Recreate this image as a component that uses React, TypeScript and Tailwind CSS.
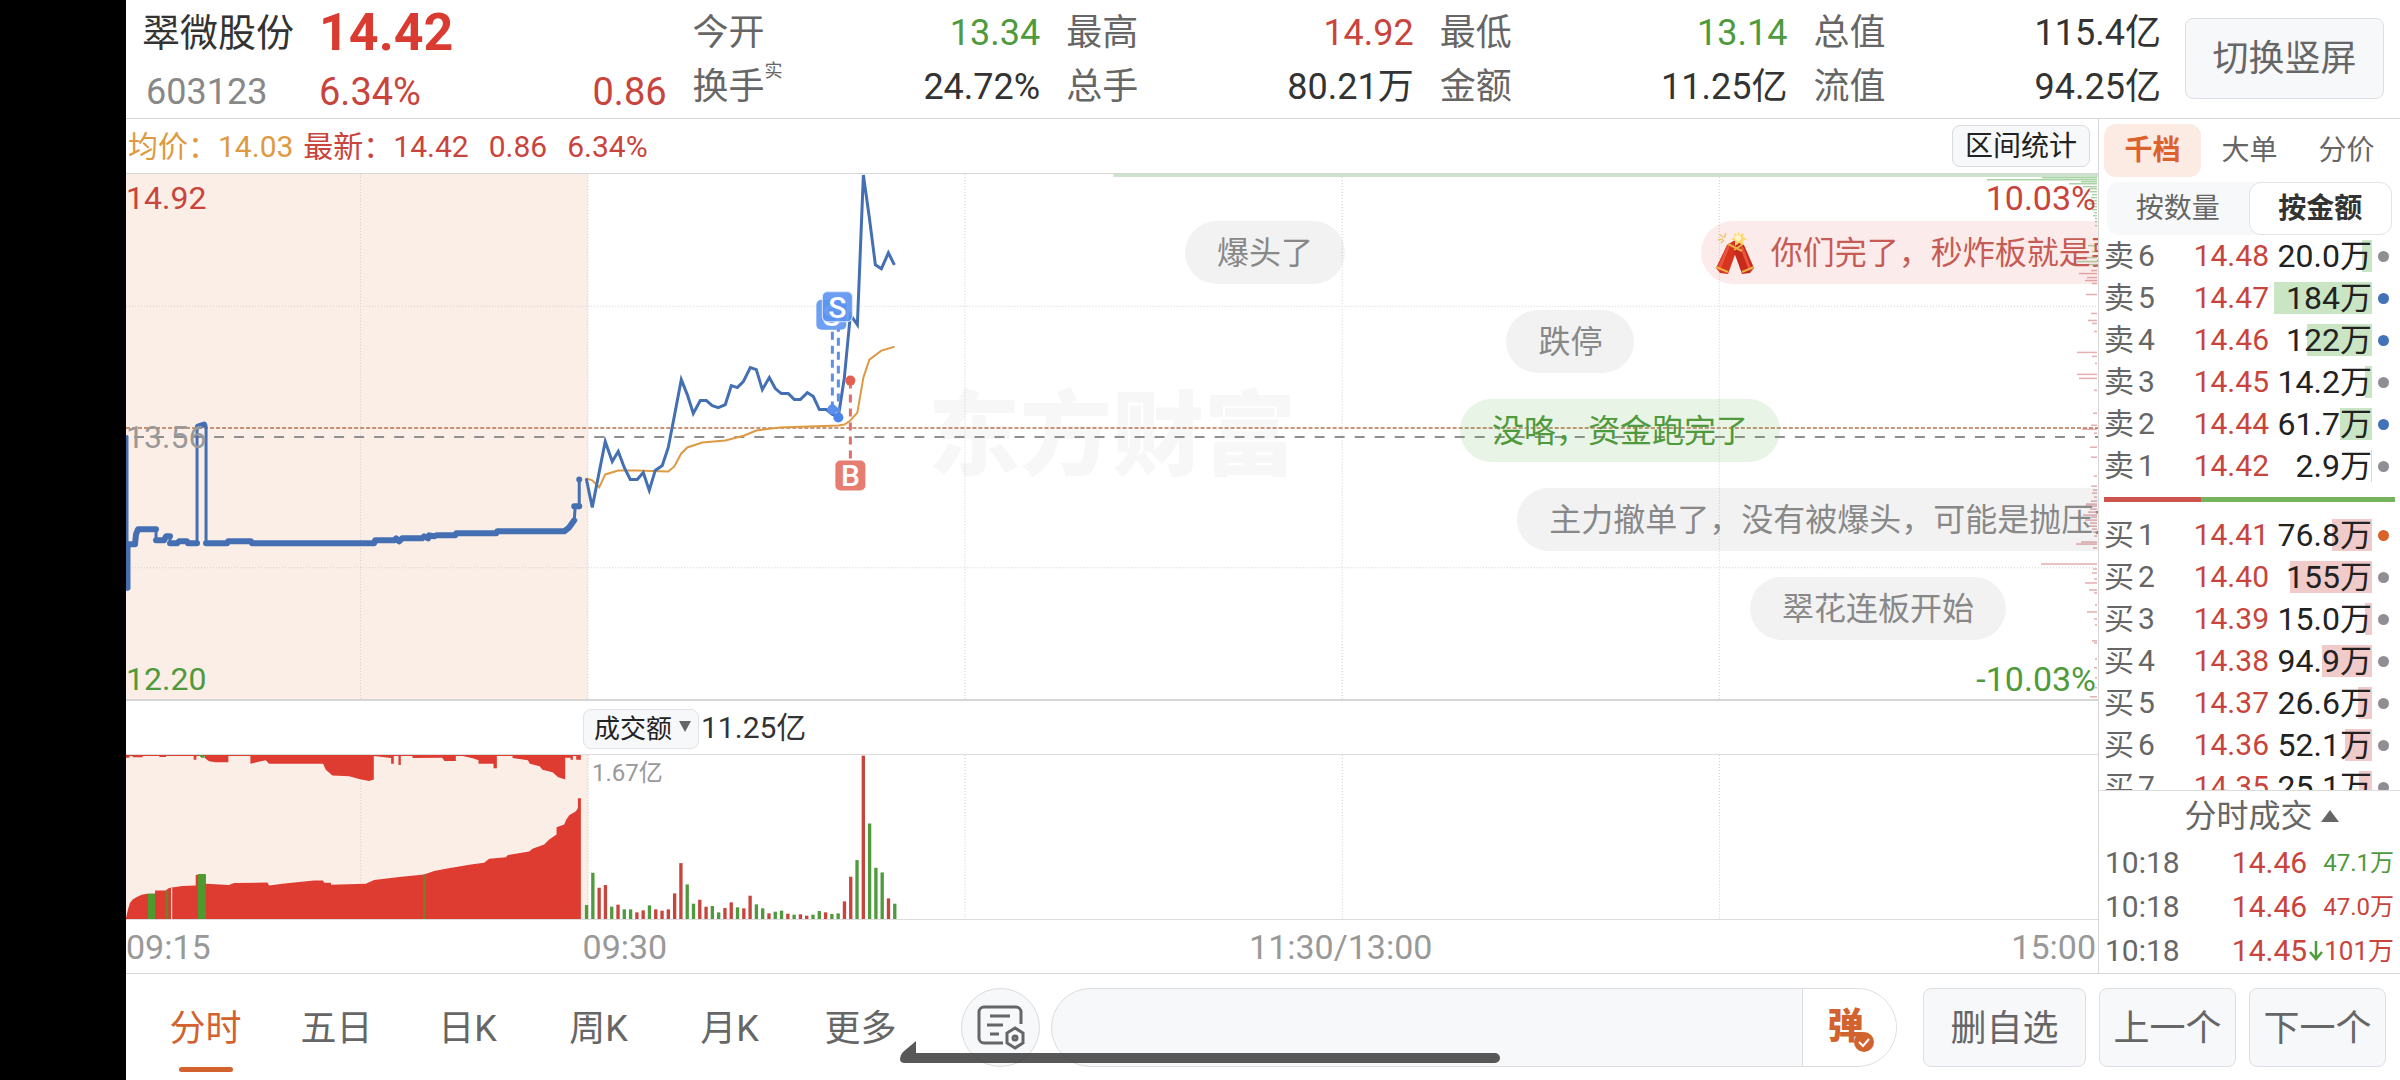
import clsx from 'clsx'

const RED = '#c8443c'
const GREEN = '#4f9a3c'

const quotes = [
  { label: '今开', value: '13.34', tone: 'text-[#4f9a3c]', label2: '换手', sup: '实', value2: '24.72%' },
  { label: '最高', value: '14.92', tone: 'text-[#c8443c]', label2: '总手', value2: '80.21万' },
  { label: '最低', value: '13.14', tone: 'text-[#4f9a3c]', label2: '金额', value2: '11.25亿' },
  { label: '总值', value: '115.4亿', tone: 'text-[#333]', label2: '流值', value2: '94.25亿' },
]

const sells = [
  { side: '卖', level: 6, price: '14.48', amount: '20.0万', bar: 10, dot: 'bg-[#8e8e93]' },
  { side: '卖', level: 5, price: '14.47', amount: '184万', bar: 98, dot: 'bg-[#4272b8]' },
  { side: '卖', level: 4, price: '14.46', amount: '122万', bar: 65, dot: 'bg-[#4272b8]' },
  { side: '卖', level: 3, price: '14.45', amount: '14.2万', bar: 7, dot: 'bg-[#8e8e93]' },
  { side: '卖', level: 2, price: '14.44', amount: '61.7万', bar: 32, dot: 'bg-[#4272b8]' },
  { side: '卖', level: 1, price: '14.42', amount: '2.9万', bar: 1, dot: 'bg-[#8e8e93]' },
]

const buys = [
  { side: '买', level: 1, price: '14.41', amount: '76.8万', bar: 40, dot: 'bg-[#d9622b]' },
  { side: '买', level: 2, price: '14.40', amount: '155万', bar: 82, dot: 'bg-[#8e8e93]' },
  { side: '买', level: 3, price: '14.39', amount: '15.0万', bar: 7, dot: 'bg-[#8e8e93]' },
  { side: '买', level: 4, price: '14.38', amount: '94.9万', bar: 50, dot: 'bg-[#8e8e93]' },
  { side: '买', level: 5, price: '14.37', amount: '26.6万', bar: 14, dot: 'bg-[#8e8e93]' },
  { side: '买', level: 6, price: '14.36', amount: '52.1万', bar: 27, dot: 'bg-[#8e8e93]' },
  { side: '买', level: 7, price: '14.35', amount: '25.1万', bar: 13, dot: 'bg-[#8e8e93]' },
]

const trades = [
  { time: '10:18', price: '14.46', amount: '47.1万', tone: 'text-[24px] text-[#4f9a3c]', down: false },
  { time: '10:18', price: '14.46', amount: '47.0万', tone: 'text-[24px] text-[#c8443c]', down: false },
  { time: '10:18', price: '14.45', amount: '101万', tone: 'text-[26px] text-[#c8443c]', down: true },
]

// x is a share of the chart width, row counts the comment lanes from the top
const comments = [
  { text: '爆头了', x: 53.7, row: 0, tone: 'bg-black/5 text-[#888]' },
  { text: '你们完了，秒炸板就是要', x: 79.85, row: 0, tone: 'bg-[#d8443c]/10 text-[#c65b55]', cracker: true },
  { text: '跌停', x: 70, row: 1, tone: 'bg-black/5 text-[#888]' },
  { text: '没咯，资金跑完了', x: 67.65, row: 2, tone: 'bg-[#4caa3c]/13 text-[#4f9a3c]' },
  { text: '主力撤单了，没有被爆头，可能是抛压力', x: 70.55, row: 3, tone: 'bg-black/5 text-[#888]' },
  { text: '翠花连板开始', x: 82.35, row: 4, tone: 'bg-black/5 text-[#888]' },
]

const auctionLine =
  '2,371 9,371 10,361 12,356 30,356 30,367 38,367 40,363 44,363 44,370 51,370 53,368 61,368 62,370 71,370 71,253 75,253 78,251 80,252 80,370 101,370 102,368 125,368 126,370 248,370 249,367 268,367 270,365 273,368 276,365 296,365 298,363 302,365 303,362 308,363 310,362 329,362 330,360 370,360 371,358 438,358 443,354 448,347 449,333 453,333 453,306'

const auctionDots =
  '2,371 9,371 10,361 12,356 30,356 M30,367 38,367 40,363 44,363 M44,370 51,370 53,368 61,368 62,370 71,370 M72,253 78,251 M80,370 101,370 102,368 125,368 126,370 248,370 249,367 268,367 270,365 273,368 276,365 296,365 298,363 302,365 303,362 308,363 310,362 329,362 330,360 370,360 371,358 438,358 443,354 448,347 M448,333 453,333 M453,306 453,306.1'

const priceLine =
  '460,305 466,334 479,268 486,288 492,278 498,294 504,306 511,306 517,299 523,317 529,297 536,292 542,274 548,243 555,206 561,221 567,240 574,227 580,227 586,232 592,234 599,231 605,212 611,214 617,208 624,194 630,196 636,216 643,204 649,215 655,220 662,220 668,226 674,226 681,219 687,223 693,236 700,236 706,241 712,243 718,204 724,141 731,151 737,1 743,44 749,91 755,95 762,79 768,91'

const averageLine =
  '460,305 466,307 473,314 479,301 492,297 510,297 542,298 548,293 555,280 561,274 576,269 599,267 618,262 630,257 653,254 712,252 718,251 724,247 731,239 737,204 743,186 755,177 768,173'

// [y, length, side] of the resting orders along the right edge
const depth: [number, number, string][] = [
  [4, 55, 'g'], [6, 110, 'g'], [8, 16, 'g'], [10, 28, 'g'], [13, 14, 'g'], [15, 8, 'g'], [18, 7, 'g'], [21, 5, 'g'], [24, 6, 'g'],
  [27, 12, 'g'], [30, 8, 'g'], [33, 4, 'g'], [36, 5, 'g'], [39, 3, 'g'], [42, 4, 'g'], [45, 2, 'g'], [48, 2, 'g'], [52, 2, 'g'],
  [72, 9, 'g'], [78, 5, 'g'], [84, 14, 'g'], [88, 20, 'g'], [91, 10, 'g'],
  [97, 6, 'r'], [100, 18, 'r'], [104, 10, 'r'], [107, 12, 'r'], [110, 5, 'r'], [121, 11, 'r'], [140, 6, 'r'], [147, 9, 'r'], [150, 5, 'r'],
  [158, 3, 'r'], [179, 20, 'r'], [183, 5, 'r'], [190, 2, 'r'], [201, 20, 'r'], [205, 18, 'r'], [217, 3, 'r'], [240, 4, 'r'], [252, 6, 'r'],
  [256, 15, 'r'], [260, 3, 'r'], [274, 7, 'r'], [284, 6, 'r'], [303, 3, 'r'], [313, 6, 'r'], [317, 4, 'r'], [320, 5, 'r'], [324, 3, 'r'],
  [328, 6, 'r'], [331, 11, 'r'], [333, 12, 'r'], [336, 7, 'r'], [339, 9, 'r'], [342, 14, 'r'], [344, 6, 'r'], [347, 12, 'r'], [350, 7, 'r'],
  [353, 8, 'r'], [356, 5, 'r'], [359, 4, 'r'], [363, 3, 'r'], [369, 16, 'r'], [371, 21, 'r'], [375, 4, 'r'], [391, 56, 'r'], [396, 4, 'r'],
  [400, 5, 'r'], [406, 3, 'r'], [410, 12, 'r'], [417, 8, 'r'], [420, 3, 'r'], [432, 2, 'r'], [439, 10, 'r'], [446, 3, 'r'], [452, 2, 'r'],
  [468, 5, 'r'], [470, 3, 'r'], [486, 2, 'r'], [495, 3, 'r'], [505, 2, 'r'], [515, 2, 'r'], [524, 7, 'r'],
]

// turnover per minute, in thirds of a pixel
const turnover: [number, string][] = [
  [42, 'g'], [139, 'g'], [94, 'r'], [102, 'r'], [37, 'g'], [43, 'r'], [29, 'g'], [29, 'g'], [20, 'r'], [26, 'r'],
  [41, 'g'], [29, 'r'], [25, 'r'], [29, 'r'], [77, 'r'], [168, 'r'], [104, 'g'], [46, 'g'], [58, 'r'], [37, 'r'],
  [39, 'g'], [20, 'g'], [33, 'r'], [50, 'r'], [35, 'g'], [32, 'r'], [70, 'r'], [44, 'g'], [32, 'g'], [17, 'r'],
  [22, 'g'], [25, 'g'], [16, 'r'], [13, 'g'], [14, 'r'], [10, 'r'], [13, 'g'], [24, 'g'], [20, 'r'], [15, 'g'],
  [17, 'g'], [53, 'r'], [127, 'r'], [177, 'g'], [491, 'r'], [287, 'g'], [154, 'g'], [140, 'g'], [62, 'r'], [46, 'g'],
]

const Firecracker = () => (
  <svg viewBox="0 0 40 44" className="h-11 w-10 shrink-0">
    <path d="M20 9 12 14 1 37l4 5 8 1 8-22z" fill="#d8331f" />
    <path d="M20 9l9 5 10 23-4 5-8 1-8-22z" fill="#c62a1b" />
    <path d="M13 16 4 38M27 17l8 21" stroke="#e8553a" strokeWidth="3" strokeLinecap="round" />
    <path d="M1 36l12 5M39 36l-12 5M13 13l14 7M28 13l-9 6" stroke="#e9b04b" strokeWidth="2" />
    <path d="M23 0l2 4 4-2-1 4 4 2-4 2 1 4-5-2-4 3 0-5-4-2 4-2-1-4 4 2z" fill="#ffd970" />
    <circle cx="23" cy="7" r="3" fill="#fff5c9" />
    <path d="M4 3l4 3M11 2l-2 5M3 9l5-1M6 12l3-3" stroke="#ecc573" strokeWidth="1.5" />
  </svg>
)

const Header = () => (
  <header className="flex h-[119px] shrink-0 items-start border-b border-[#d6d6d6] pr-4 pl-4">
    <div className="w-[177px] shrink-0 pt-2">
      <h1 className="text-[38px] leading-[50px] text-[#333]">翠微股份</h1>
      <p className="mt-2.5 pl-1 text-[36px] leading-[48px] text-[#888]">603123</p>
    </div>
    <div className="grid flex-1 grid-cols-5 gap-x-[26px] text-[36px] leading-[48px]">
      <div className="pt-2 text-[#c8443c]">
        <p className="text-[52px] leading-[50px] font-bold text-[#da3b31]">14.42</p>
        <div className="mt-2.5 flex justify-between text-[38px]">
          <span>6.34%</span>
          <span>0.86</span>
        </div>
      </div>
      {quotes.map((q) => (
        <dl key={q.label} className="grid grid-cols-[auto_1fr] content-start gap-y-1.5 pt-[9px] text-[#333]">
          <dt className="text-[#666]">{q.label}</dt>
          <dd className={clsx('text-right', q.tone)}>{q.value}</dd>
          <dt className="flex text-[#666]">
            {q.label2}
            {q.sup && <span className="text-[18px] leading-4">{q.sup}</span>}
          </dt>
          <dd className="text-right">{q.value2}</dd>
        </dl>
      ))}
    </div>
    <button className="mt-[18px] ml-6 h-[81px] w-[199px] rounded-lg border border-[#dcdfe3] bg-[#f7f8fa] text-[36px] text-[#666]">切换竖屏</button>
  </header>
)

const PriceChart = () => (
  <div className="relative min-h-0 flex-1 overflow-hidden border-b-2 border-[#d6d6d6] text-[32px] leading-8">
    <div className="absolute inset-0 flex items-center justify-center text-[92px] font-black text-[#f7f7f7]">东方财富</div>
    <svg viewBox="0 0 1971 526" preserveAspectRatio="none" className="absolute inset-0 h-full w-full">
      <rect width="462" height="526" fill="#fbeee7" />
      <g stroke="#cfcfcf" strokeDasharray="1 2">
        <path d="M0 132.5H1971M0 394.5H1971M234.5 0V526M461.5 0V526M838.5 0V526M1215.5 0V526M1592.5 0V526" />
      </g>
      <rect x="987" width="984" height="3" fill="#cde3cc" />
      {depth.map(([y, len, side]) => (
        <rect key={y} x={1970 - len} y={y - 1} width={len} height="1.5" fill={side === 'g' ? '#a9d3a5' : '#e3aeb0'} />
      ))}
      <path d="M0 254.5H1971" stroke="#b8734f" strokeWidth="1.5" strokeDasharray="4 2" />
      <path d="M8 263.5H1971" stroke="#8f8f8f" strokeWidth="2" strokeDasharray="10 10" />
      <g fill="none" stroke="#4470b3" strokeLinejoin="round" strokeLinecap="round">
        <path d="M1 263V416" strokeWidth="3" />
        <path d="M2 371V415" strokeWidth="5" />
        <polyline points={auctionLine} strokeWidth="3" />
        <path d={`M${auctionDots}`} strokeWidth="6" />
      </g>
      <polyline points={averageLine} fill="none" stroke="#dd9a42" strokeWidth="2" />
      <polyline points={priceLine} fill="none" stroke="#4470b3" strokeWidth="3" />
      <g stroke="#5c8fe6" strokeWidth="3" strokeDasharray="8 6">
        <path d="M706 158V236M712 150V244" />
        <path d="M724 207V286" stroke="#dd7067" />
      </g>
      <circle cx="706" cy="236" r="5" fill="#5a8fee" />
      <circle cx="712" cy="244" r="5" fill="#4a84ea" />
      <circle cx="724" cy="207" r="5" fill="#e3604f" />
      <g fontSize="30" fontWeight="500" textAnchor="middle" fill="#fff">
        <rect x="690" y="126" width="30" height="30" rx="5" fill="#6d9ff2" />
        <text x="705" y="152">S</text>
        <rect x="696" y="118" width="30" height="30" rx="5" fill="#5b92f0" fillOpacity="0.9" stroke="#dbe7fc" />
        <text x="711" y="144">S</text>
        <rect x="709" y="287" width="30" height="30" rx="5" fill="#e67d70" />
        <text x="724" y="313">B</text>
      </g>
    </svg>
    <span className="absolute top-2 left-0 text-[#c8443c]">14.92</span>
    <span className="absolute top-1/2 left-0 -translate-y-1/2 text-[#999]">13.56</span>
    <span className="absolute bottom-1 left-0 text-[#4f9a3c]">12.20</span>
    <span className="absolute top-2 right-0.5 text-[34px] text-[#c8443c]">10.03%</span>
    <span className="absolute right-0.5 bottom-1 text-[34px] text-[#4f9a3c]">-10.03%</span>
    {comments.map((c) => (
      <div
        key={c.text}
        className={clsx('absolute flex h-[63px] items-center rounded-full whitespace-nowrap', c.cracker ? 'gap-4 px-3.5' : 'px-8', c.tone)}
        style={{ left: `${c.x}%`, top: 47 + c.row * 89 }}
      >
        {c.cracker && <Firecracker />}
        {c.text}
      </div>
    ))}
  </div>
)

const VolumeChart = () => (
  <div className="relative h-[166px] shrink-0 border-y border-[#dcdcdc]">
    {/* three units to the pixel */}
    <svg viewBox="0 0 5913 493" preserveAspectRatio="none" className="absolute inset-0 h-full w-full">
      <rect width="1387" height="493" fill="#fbeee7" />
      <path d="M704 0V493M1385 0V493M2516 0V493M3647 0V493M4778 0V493" stroke="#cfcfcf" strokeWidth="3" strokeDasharray="3 6" />
      <g fill="#de3b31">
        <path d="M0 493V490L6 464 12 444 21 434 34 426 47 420 64 417H87V407H119L129 400 169 394 209 392V360H239V387L309 391 324 385 424 383 429 392 469 387 519 382 564 377H591L594 384H614L615 390 719 387 744 376 819 367 894 359 924 349 959 342 1034 329 1074 324 1089 312 1139 307 1144 301 1209 290 1219 282 1254 269 1269 254 1291 239V217L1314 209 1320 195 1329 181 1349 169 1355 159V130H1364V493Z" />
        <path d="M0 0H1364V14H1350V3H1340V14H1333V8H1317V74L1299 68 1295 66 1279 52 1249 44 1240 34 1211 26 1205 16 1159 9V3H1112V40H1102V26H1057V16L1040 10 1009 3H989V18H955L948 8 859 9V3H824V30H817V3H803V26H795V9L743 3V74L729 78 699 72 669 64 619 62 599 44 591 26H429L419 16 373 26V3H307V22H269L249 19 237 10V3H211V14H203V3H120V6H100V3H50V7H20V3H10V8H0Z" />
      </g>
      <path d="M66 417H87V493H66ZM216 358H239V493H216ZM218 0H234L237 8H226Z" fill="#4f9a2e" />
      <path d="M119 408H127V493H119ZM891 359H899V493H891Z" fill="#7a7a2c" />
      <path d="M137 400V493" stroke="#fff" strokeWidth="3" />
      {turnover.map(([h, side], i) => (
        <rect key={i} x={1376 + i * 18.86} y={493 - h} width="10" height={h} fill={side === 'g' ? GREEN : RED} />
      ))}
    </svg>
    <span className="absolute top-1 left-[466px] text-[24px] leading-7 text-[#999]">1.67亿</span>
  </div>
)

const OrderRows = ({ rows, fill }: { rows: typeof sells; fill: string }) => (
  <table className="w-full text-[30px] leading-[42px]">
    <tbody>
      {rows.map((r) => (
        <tr key={r.level}>
          <td className="h-[42px] p-0 text-[#666]">
            <span className="mr-1">{r.side}</span>
            {r.level}
          </td>
          <td className="p-0 text-right text-[#c8443c]">{r.price}</td>
          <td className="relative w-[103px] p-0 text-right text-[32px] text-[#222]">
            <span className={clsx('absolute top-[5px] right-0 h-8', fill)} style={{ width: r.bar }} />
            <span className="relative">{r.amount}</span>
          </td>
          <td className="w-[23px] p-0">
            <span className={clsx('ml-1.5 block size-[11px] rounded-full', r.dot)} />
          </td>
        </tr>
      ))}
    </tbody>
  </table>
)

const OrderPanel = () => (
  <aside className="flex w-[302px] shrink-0 flex-col border-l border-[#d6d6d6]">
    <div className="mt-[5px] flex h-[53px] shrink-0 px-[5px] text-[28px] text-[#666]">
      <button className="flex-1 rounded-xl bg-[#fcebe3] font-bold text-[#dc622c]">千档</button>
      <button className="flex-1">大单</button>
      <button className="flex-1">分价</button>
    </div>
    <div className="mx-2 mt-[5px] flex h-[53px] shrink-0 rounded-xl bg-[#f7f8fa] text-[28px] text-[#666]">
      <button className="flex-1">按数量</button>
      <button className="flex-1 rounded-xl border border-[#e3e4e6] bg-white font-bold text-[#333]">按金额</button>
    </div>
    <div className="min-h-0 flex-1 overflow-hidden px-[5px]">
      <OrderRows rows={sells} fill="bg-[#c9e5c4]" />
      <div className="mt-[10px] mb-[12px] flex h-[5px]">
        <div className="w-1/3 bg-[#cc544d]" />
        <div className="flex-1 bg-[#76b35d]" />
      </div>
      <OrderRows rows={buys} fill="bg-[#f1caca]" />
    </div>
    <div className="shrink-0 border-t border-[#dcdcdc] px-[6px] text-[30px] leading-[44px]">
      <button className="flex h-[50px] w-full items-center justify-center gap-2 pl-6 text-[32px] text-[#666]">
        分时成交
        <svg viewBox="0 0 18 12" className="h-3 w-[18px]">
          <path d="M9 0l9 12H0z" fill="#666" />
        </svg>
      </button>
      <table className="w-full">
        <tbody>
          {trades.map((t, i) => (
            <tr key={i}>
              <td className="h-[44px] p-0 text-[#666]">{t.time}</td>
              <td className="p-0 text-right text-[#c8443c]">{t.price}</td>
              <td className="w-[16px] p-0">
                {t.down && (
                  <svg viewBox="0 0 14 20" className="ml-0.5 h-5 w-3.5">
                    <path d="M7 0V18M1 11l6 7 6-7" fill="none" stroke="#4f9a3c" strokeWidth="2.5" />
                  </svg>
                )}
              </td>
              <td className={clsx('w-[70px] p-0 text-right whitespace-nowrap', t.tone)}>{t.amount}</td>
            </tr>
          ))}
        </tbody>
      </table>
    </div>
  </aside>
)

const Footer = () => (
  <footer className="flex h-[107px] shrink-0 items-center border-t border-[#d6d6d6] pr-3.5 pl-3.5 text-[36px] text-[#666]">
    <nav className="flex h-full">
      {['分时', '五日', '日K', '周K', '月K', '更多'].map((tab, i) => (
        <button key={tab} className={clsx('relative w-[131px] pt-1', i === 0 && 'text-[#d2622e]')}>
          {tab}
          {i === 0 && <span className="absolute bottom-2 left-1/2 h-[5px] w-[54px] -translate-x-1/2 rounded-full bg-[#d2622e]" />}
        </button>
      ))}
    </nav>
    <button aria-label="设置" className="ml-[35px] flex size-[79px] shrink-0 items-center justify-center rounded-full border border-[#d9dbde] bg-[#f7f8fa]">
      <svg viewBox="0 0 50 46" className="h-[46px] w-[50px]" fill="none" stroke="#666" strokeWidth="3">
        <path d="M27 39H8a5 5 0 0 1-5-5V8a5 5 0 0 1 5-5H40a5 5 0 0 1 5 5V20" />
        <path d="M14 12H34M11 21H27M14 30H23" />
        <path d="M39 24l8 5v10l-8 5-8-5V29z" />
        <circle cx="39" cy="34" r="2" />
      </svg>
    </button>
    <div className="ml-[11px] flex h-[79px] flex-1 overflow-hidden rounded-full border border-[#d9dbde] bg-[#f7f8fa]">
      <input aria-label="弹幕" className="min-w-0 flex-1 px-8 outline-none" />
      <button className="relative w-[94px] border-l border-[#d9dbde] bg-white pr-2 font-black text-[#d2622e]">
        弹
        <svg viewBox="0 0 20 20" className="absolute right-[22px] bottom-3.5 size-5">
          <circle cx="10" cy="10" r="10" fill="#d2622e" />
          <path d="M5 10l4 4 6-7" fill="none" stroke="#fff" strokeWidth="2" />
        </svg>
      </button>
    </div>
    <div className="ml-[26px] flex gap-[13px]">
      <button className="h-[79px] w-[163px] rounded-lg border border-[#dcdfe3] bg-[#f7f8fa] pt-1">删自选</button>
      <button className="h-[79px] w-[137px] rounded-lg border border-[#dcdfe3] bg-[#f7f8fa] pt-1">上一个</button>
      <button className="h-[79px] w-[137px] rounded-lg border border-[#dcdfe3] bg-[#f7f8fa] pt-1">下一个</button>
    </div>
  </footer>
)

export default function App() {
  return (
    <div className="relative flex h-screen bg-black font-[Roboto,'Noto_Sans_CJK_SC',sans-serif]">
      <div className="ml-[126px] flex min-w-0 flex-1 flex-col bg-white">
        <Header />
        <main className="flex min-h-0 flex-1">
          <section className="flex min-w-0 flex-1 flex-col">
            <div className="flex h-[55px] shrink-0 items-center border-b border-[#d6d6d6] pr-2 pl-0.5 text-[30px] text-[#c8443c]">
              <span className="text-[#dd9a42]">均价：14.03</span>
              <span className="ml-2.5">最新：14.42</span>
              <span className="ml-5">0.86</span>
              <span className="ml-5">6.34%</span>
              <button className="ml-auto h-[42px] w-[138px] rounded-lg border border-[#d9dbde] bg-[#f7f8fa] pt-0.5 text-[28px] leading-8 text-[#222]">区间统计</button>
            </div>
            <PriceChart />
            <div className="flex h-[53px] shrink-0 items-center pl-[457px] text-[30px] text-[#333]">
              <div className="relative">
                <select aria-label="指标" className="h-10 w-[116px] appearance-none rounded-lg border border-[#e1e3e6] bg-[#f7f8fa] pl-2.5 text-[26px] text-[#222]">
                  <option>成交额</option>
                </select>
                <svg viewBox="0 0 12 11" className="pointer-events-none absolute top-4 right-2 h-[11px] w-3">
                  <path d="M0 0H12L6 11z" fill="#666" />
                </svg>
              </div>
              <span className="ml-0.5">11.25亿</span>
            </div>
            <VolumeChart />
            <div className="grid h-[53px] shrink-0 grid-cols-[457fr_516fr_486fr_513fr] items-center pt-0.5 pr-0.5 text-[34px] text-[#999]">
              <span>09:15</span>
              <span>09:30</span>
              <span className="text-center">11:30/13:00</span>
              <span className="text-right">15:00</span>
            </div>
          </section>
          <OrderPanel />
        </main>
        <Footer />
      </div>
      {/* home gesture bar */}
      <svg viewBox="0 0 600 22" className="pointer-events-none absolute bottom-[17px] left-1/2 h-[22px] w-[600px] -translate-x-1/2">
        <path d="M0 18Q0 14 3 11L16 0V12H595a5 5 0 0 1 0 10H5Q0 22 0 18Z" fill="#333" fillOpacity="0.82" />
      </svg>
    </div>
  )
}
